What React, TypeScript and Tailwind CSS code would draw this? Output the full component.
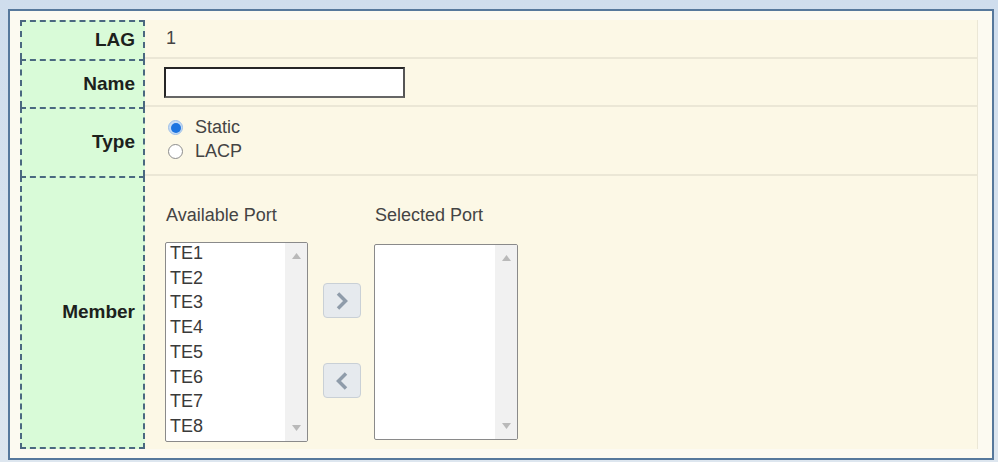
import React from 'react';

const ports = ['TE1', 'TE2', 'TE3', 'TE4', 'TE5', 'TE6', 'TE7', 'TE8'];

const Label: React.FC<{ text: string; h: string; last?: boolean }> = ({ text, h, last }) => (
  <div
    className={`${h} w-[125px] shrink-0 flex items-center justify-end pr-[8px] bg-[#d9fbd8] border-l-2 border-r-2 border-t-2 border-dashed border-[#4a6880] text-[19px] font-bold text-[#1c211c] ${last ? 'border-b-2' : ''}`}
  >
    {text}
  </div>
);

const Scrollbar: React.FC = () => (
  <div className="w-[22px] h-full bg-[#f1f1f1] flex flex-col items-center justify-between py-[10px]">
    <svg width="9" height="6" viewBox="0 0 9 6">
      <path d="M0 6 L4.5 0 L9 6 Z" fill="#b9b9b9" />
    </svg>
    <svg width="9" height="6" viewBox="0 0 9 6">
      <path d="M0 0 L4.5 6 L9 0 Z" fill="#b9b9b9" />
    </svg>
  </div>
);

const MoveButton: React.FC<{ dir: 'right' | 'left' }> = ({ dir }) => (
  <button className="w-[38px] h-[35px] rounded-[4px] border border-[#c9d0d6] bg-[#e6eaee] flex items-center justify-center">
    <svg width="14" height="20" viewBox="0 0 14 20">
      {dir === 'right' ? (
        <path d="M3 2.5 L10.5 10 L3 17.5" fill="none" stroke="#8f9caa" strokeWidth="3.5" />
      ) : (
        <path d="M11 2.5 L3.5 10 L11 17.5" fill="none" stroke="#8f9caa" strokeWidth="3.5" />
      )}
    </svg>
  </button>
);

const Radio: React.FC<{ checked?: boolean; label: string }> = ({ checked, label }) => (
  <div className="flex items-center h-[24px]">
    {checked ? (
      <span className="w-[15px] h-[15px] rounded-full bg-[#c6dcf5] border border-[#9fc0e8] flex items-center justify-center">
        <span className="w-[10px] h-[10px] rounded-full bg-[#1c74e0]" />
      </span>
    ) : (
      <span className="w-[15px] h-[15px] rounded-full bg-white border border-[#8c8c8c]" />
    )}
    <span className="ml-[12px] text-[18px] text-[#444]">{label}</span>
  </div>
);

const App: React.FC = () => {
  return (
    <div
      className="w-[998px] h-[462px] bg-gradient-to-b from-[#cfdded] to-[#dde6ef] pt-[9px] pl-[8px]"
      style={{ fontFamily: '"Liberation Sans", Arial, sans-serif' }}
    >
      <div className="w-[986px] h-[451px] border-2 border-[#56789c] bg-[#fcfaf1] pt-[9px] pl-[10px]">
        <div className="w-[958px] flex flex-col bg-[#fcf8e6]">
          {/* LAG */}
          <div className="flex">
            <Label text="LAG" h="h-[39px]" />
            <div className="flex-1 flex items-center pl-[21px] border-b-2 border-r border-[#ebe7d6] text-[18px] text-[#444]">
              1
            </div>
          </div>

          {/* Name */}
          <div className="flex">
            <Label text="Name" h="h-[48px]" />
            <div className="flex-1 flex items-center pl-[19px] border-b-2 border-r border-[#ebe7d6]">
              <input
                type="text"
                className="w-[241px] h-[31px] bg-white border-2 border-t-[#262626] border-l-[#262626] border-r-[#555] border-b-[#666] outline-none"
              />
            </div>
          </div>

          {/* Type */}
          <div className="flex">
            <Label text="Type" h="h-[69px]" />
            <div className="flex-1 flex flex-col justify-center pl-[23px] pb-[2px] border-b-2 border-r border-[#ebe7d6]">
              <Radio checked label="Static" />
              <Radio label="LACP" />
            </div>
          </div>

          {/* Member */}
          <div className="flex">
            <Label text="Member" h="h-[273px]" last />
            <div className="flex-1 flex pl-[20px] pt-[27px] border-r border-[#ebe7d6]">
              <div className="flex flex-col">
                <div className="h-[24px] leading-[24px] text-[18px] text-[#444] mb-[15px] pl-[1px]">Available Port</div>
                <div className="w-[143px] h-[200px] bg-white border border-[#8a8a8a] rounded-[2px] flex overflow-hidden">
                  <div className="flex-1 pl-[4px] -mt-[2px]">
                    {ports.map((p) => (
                      <div key={p} className="text-[18px] leading-[24.7px] text-[#3a3a3a]">
                        {p}
                      </div>
                    ))}
                  </div>
                  <Scrollbar />
                </div>
              </div>

              <div className="flex flex-col items-center ml-[15px] pt-[80px] gap-[45px]">
                <MoveButton dir="right" />
                <MoveButton dir="left" />
              </div>

              <div className="flex flex-col ml-[13px]">
                <div className="h-[24px] leading-[24px] text-[18px] text-[#444] mb-[17px] pl-[1px]">Selected Port</div>
                <div className="w-[144px] h-[196px] bg-white border border-[#8a8a8a] rounded-[2px] flex overflow-hidden">
                  <div className="flex-1" />
                  <Scrollbar />
                </div>
              </div>
            </div>
          </div>
        </div>
      </div>
    </div>
  );
};

export default App;
